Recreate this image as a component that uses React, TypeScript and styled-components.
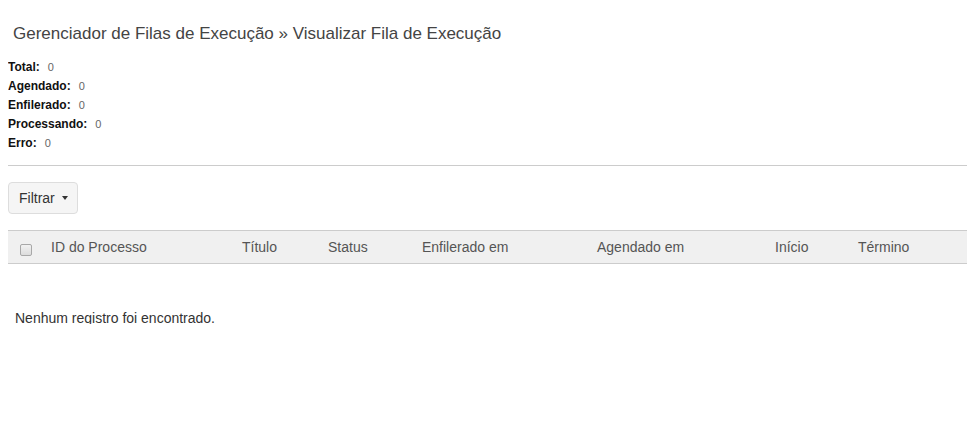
import { createGlobalStyle, styled } from 'styled-components';

const GlobalStyle = createGlobalStyle`
  body {
    margin: 8px;
    font-family: 'Liberation Sans', Arial, sans-serif;
    color: #333;
    background: #fff;
  }
`;

// the empty-state line is cut by the panel's fixed height, as in the source page
const Page = styled.div`
  height: 316px;
  overflow: hidden;
`;

const Title = styled.h1`
  margin: 16px 0 14px 5px;
  font-size: 17px;
  font-weight: 400;
  line-height: 20px;
  color: #444;
`;

const Stats = styled.dl`
  margin: 0;
  display: flex;
  flex-direction: column;
`;

const StatRow = styled.div`
  display: flex;
  align-items: baseline;
  height: 19px;
  line-height: 19px;
`;

const StatLabel = styled.dt`
  font-size: 12px;
  font-weight: 700;
  color: #111;
  margin-right: 8px;
`;

const StatValue = styled.dd`
  margin: 0;
  font-size: 11px;
  color: #666;
`;

const Divider = styled.hr`
  margin: 12px 0 16px;
  border: 0;
  border-top: 1px solid #ccc;
`;

const FilterButton = styled.button`
  display: inline-flex;
  align-items: center;
  gap: 7px;
  height: 32px;
  padding: 0 9px 0 10px;
  font-family: inherit;
  font-size: 14px;
  color: #333;
  background: #f5f5f5;
  border: 1px solid #ddd;
  border-radius: 4px;
`;

const Caret = styled.span`
  width: 0;
  height: 0;
  border-left: 3px solid transparent;
  border-right: 3px solid transparent;
  border-top: 4px solid #333;
`;

const Table = styled.table`
  width: 100%;
  margin-top: 16px;
  border-collapse: collapse;
`;

const HeadCell = styled.th<{ $width?: number }>`
  ${({ $width }) => ($width ? `width: ${$width}px;` : '')}
  height: 32px;
  padding: 0;
  text-align: left;
  font-size: 14px;
  font-weight: 400;
  color: #555;
  background: #f0f0f0;
  border-top: 1px solid #ccc;
  border-bottom: 1px solid #ccc;
`;

const Check = styled.input`
  appearance: none;
  display: block;
  margin: 5px 0 0 12px;
  width: 12px;
  height: 12px;
  border: 1px solid #a8a8a8;
  border-radius: 2px;
  background: linear-gradient(#f2f2f2, #dcdcdc);
`;

const Empty = styled.p`
  margin: 46px 0 0 7px;
  font-size: 14px;
  color: #333;
`;

const stats = [
  ['Total:', 0],
  ['Agendado:', 0],
  ['Enfilerado:', 0],
  ['Processando:', 0],
  ['Erro:', 0],
] as const;

const columns: [string, number | undefined][] = [
  ['ID do Processo', 191],
  ['Título', 86],
  ['Status', 94],
  ['Enfilerado em', 175],
  ['Agendado em', 178],
  ['Início', 83],
  ['Término', undefined],
];

export default function App() {
  return (
    <Page>
      <GlobalStyle />
      <Title>Gerenciador de Filas de Execução » Visualizar Fila de Execução</Title>
      <Stats>
        {stats.map(([label, value]) => (
          <StatRow key={label}>
            <StatLabel>{label}</StatLabel>
            <StatValue>{value}</StatValue>
          </StatRow>
        ))}
      </Stats>
      <Divider />
      <FilterButton type="button">
        Filtrar <Caret />
      </FilterButton>
      <Table>
        <thead>
          <tr>
            <HeadCell $width={43}>
              <Check type="checkbox" />
            </HeadCell>
            {columns.map(([name, width]) => (
              <HeadCell key={name} $width={width}>
                {name}
              </HeadCell>
            ))}
          </tr>
        </thead>
      </Table>
      <Empty>Nenhum registro foi encontrado.</Empty>
    </Page>
  );
}
